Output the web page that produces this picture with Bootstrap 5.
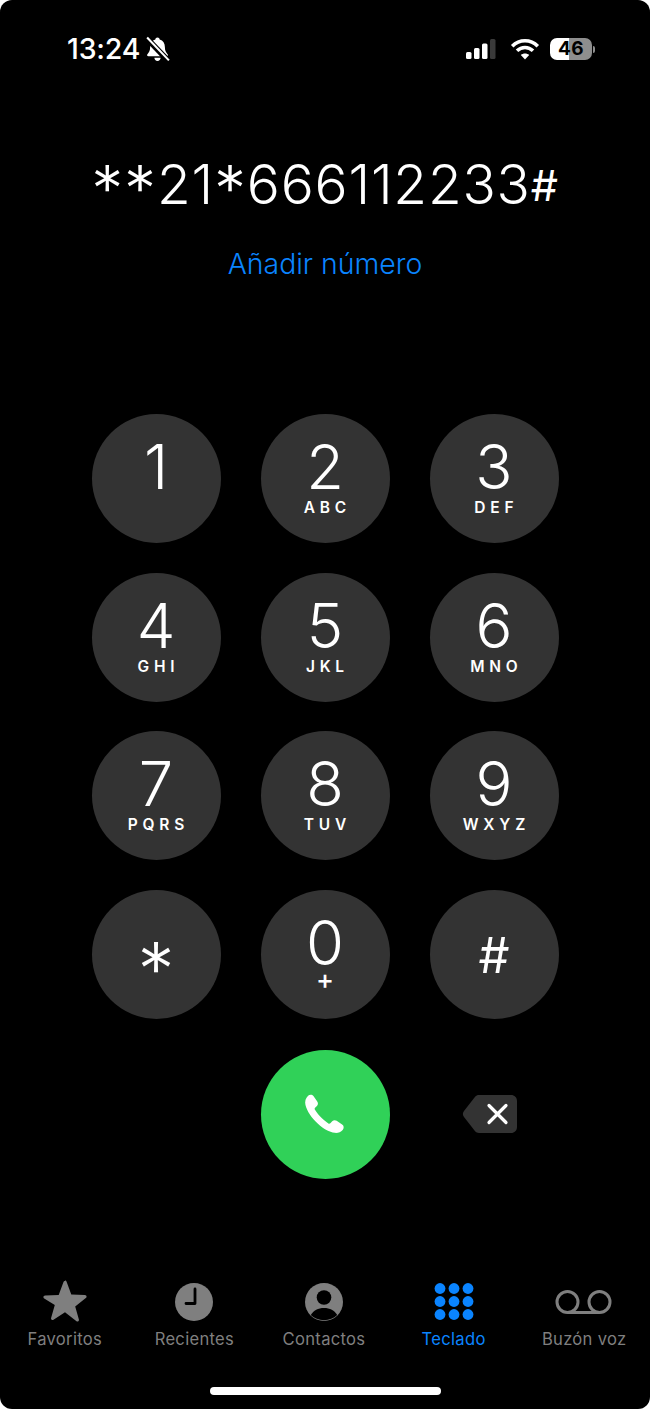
<!DOCTYPE html>
<html lang="es">
<head>
  <meta charset="UTF-8" />
  <meta name="viewport" content="width=device-width, initial-scale=1.0"/>
  <title>Teclado</title>
  <link href="https://cdn.jsdelivr.net/npm/bootstrap@5.3.0/dist/css/bootstrap.min.css" rel="stylesheet" />
  <style>
      html, body { height: 1409px; background: #fff; overflow: hidden; }
      body { font-family: Inter, "Liberation Sans", sans-serif; color: #fff; }
      .phone { width: 650px; height: 1409px; background: #000; border-radius: 12px; }
      .status-row { height: 148px; padding: 30px 55px 0 67px; }
      .clock { font-size: 28.5px; font-weight: 500; line-height: 38px; letter-spacing: -.2px; }
      .batt { width: 42px; height: 22px; border-radius: 7px; background: linear-gradient(90deg, #fff 46%, #8e8e8e 46%); color: #000; font-size: 19px; font-weight: 700; line-height: 22px; text-align: center; letter-spacing: .5px; }
      .batt-tip { width: 2px; height: 7px; background: #8e8e8e; border-radius: 0 2px 2px 0; margin-left: 1px; }
      .dialed { height: 72px; font-size: 55px; font-weight: 300; line-height: 72px; text-align: center; letter-spacing: .8px; }
      .dial-ast { font-size: 64px; line-height: 0; vertical-align: -8px; }
      .dial-hash { font-size: 43px; font-weight: 400; line-height: 0; vertical-align: 3px; }
      .add-number { display: block; margin-top: 26px; height: 36px; line-height: 36px; color: #0a84ff; font-size: 28.4px; font-weight: 300; text-align: center; text-decoration: none; }
      .keypad { width: 467px; margin: 132px auto 0 auto; display: grid; grid-template-columns: repeat(3, 129px); column-gap: 40px; row-gap: 29.67px; }
      .key { width: 129px; height: 129px; border-radius: 50%; background: #333; padding: 28px 0 0 0; border: 0; color: #fff; display: flex; flex-direction: column; align-items: center; justify-content: flex-start; }
      .key-num { display: block; font-size: 61.5px; font-weight: 300; line-height: 50px; }
      .key-sub { display: block; font-size: 15.5px; font-weight: 600; line-height: 16px; letter-spacing: 4.8px; margin-right: -4.8px; margin-top: 8px; }
      .key-plus { font-size: 27px; font-weight: 500; letter-spacing: 0; margin-right: 0; margin-top: 4px; }
      .key-star { display: block; font-size: 74px; font-weight: 300; line-height: 50px; margin-top: 26px; }
      .key-hash { display: block; font-size: 49px; font-weight: 400; line-height: 50px; margin-top: 13px; }
      .key-call { background: #30d158; padding: 0; justify-content: center; margin-top: 1px; }
      .back-wrap { width: 129px; height: 129px; padding-right: 8px; margin-top: 1px; }
      .tabs { margin-top: 99px; height: 94px; }
      .tab-item { width: 129.6px; color: #7f7f7f; font-size: 16.6px; line-height: 22px; text-decoration: none; letter-spacing: .3px; }
      .tab-item.active { color: #0a84ff; }
      .tab-icon { height: 45px; margin-bottom: 5px; }
      .tab-voice { width: 131.6px; }
      .home-bar { width: 231px; height: 8px; background: #fff; border-radius: 4px; margin: 15px auto 0 auto; }
  </style>
</head>
<body>
  <div class="phone d-flex flex-column">
    <div class="status-row d-flex justify-content-between align-items-start">
      <div class="d-flex align-items-center">
        <span class="clock">13:24</span>
        <svg class="ms-1" width="27" height="27" viewBox="0 0 26 26">
          <path d="M13 1.500c1.200 0 2 .8 2.100 1.800 3.400 1 5 3.800 5 7.400 0 3.600 1 5.200 2.600 6.800.6.600.4 2-1 2H4.300c-1.400 0-1.600-1.400-1-2 1.600-1.600 2.600-3.200 2.600-6.800 0-3.600 1.600-6.400 5-7.400.1-1 .9-1.800 2.100-1.800zM10 21h6c0 1.700-1.300 3-3 3s-3-1.300-3-3z" fill="#fff"/>
          <path d="M2 1.500 24 24.500" stroke="#000" stroke-width="5.500"/>
          <path d="M3 1.500 24 23.500" stroke="#fff" stroke-width="2"/>
        </svg>
      </div>
      <div class="d-flex align-items-center" style="height:38px">
        <svg width="34" height="22" viewBox="0 0 34 22" style="margin-right:11px">
          <rect x="1" y="14" width="5.500" height="7" rx="1.500" fill="#fff"/>
          <rect x="9" y="10" width="5.500" height="11" rx="1.500" fill="#fff"/>
          <rect x="17" y="5.500" width="5.500" height="15.500" rx="1.500" fill="#fff"/>
          <rect x="25" y="1" width="5.500" height="20" rx="1.500" fill="#3a3a3a"/>
        </svg>
        <svg width="30" height="22" viewBox="0 0 30 22" fill="none" stroke="#fff" stroke-width="3.600" style="margin-right:10px">
          <path d="M2.200 8.200C9.500 1 20.500 1 27.800 8.200"/>
          <path d="M7 12.800c4.600-4.400 11.400-4.400 16 0"/>
          <path d="M15 21.500 10.800 17c2.400-2 6-2 8.400 0z" fill="#fff" stroke="none"/>
        </svg>
        <div class="batt">46</div>
        <div class="batt-tip"></div>
      </div>
    </div>

    <div class="dialed"><span class="dial-ast">*</span><span class="dial-ast">*</span>21<span class="dial-ast">*</span>666112233<span class="dial-hash">#</span></div>
    <a class="add-number" href="#">Añadir número</a>

    <div class="keypad">
      <button class="key" type="button"><span class="key-num">1</span></button>
      <button class="key" type="button"><span class="key-num">2</span><span class="key-sub">ABC</span></button>
      <button class="key" type="button"><span class="key-num">3</span><span class="key-sub">DEF</span></button>
      <button class="key" type="button"><span class="key-num">4</span><span class="key-sub">GHI</span></button>
      <button class="key" type="button"><span class="key-num">5</span><span class="key-sub">JKL</span></button>
      <button class="key" type="button"><span class="key-num">6</span><span class="key-sub">MNO</span></button>
      <button class="key" type="button"><span class="key-num">7</span><span class="key-sub">PQRS</span></button>
      <button class="key" type="button"><span class="key-num">8</span><span class="key-sub">TUV</span></button>
      <button class="key" type="button"><span class="key-num">9</span><span class="key-sub">WXYZ</span></button>
      <button class="key" type="button"><span class="key-star">*</span></button>
      <button class="key" type="button"><span class="key-num">0</span><span class="key-sub key-plus">+</span></button>
      <button class="key" type="button"><span class="key-hash">#</span></button>
      <div></div>
      <button class="key key-call" type="button">
        <svg width="48" height="48" viewBox="0 0 44 44">
          <path d="M6.500 5.200c1.500-1.300 3.700-1.300 4.900.3l3.500 5c1 1.400.8 3-.3 4.100l-1.700 1.700c-.5.500-.5 1.200-.1 1.800 1.800 2.900 3.900 5.500 6.400 7.900 2.100 2 3.900 3.400 5.900 4.600.6.400 1.300.3 1.800-.2l1.700-1.700c1.100-1.100 2.800-1.300 4.100-.4l5 3.300c1.700 1.100 1.900 3.400.5 5-1.800 2-4.200 3-7.300 2.700-4.800-.5-10.300-3.500-15.600-8.500C9.500 25.500 5.400 19.200 4.100 13.800c-.8-3.500.2-6.500 2.400-8.600z" fill="#fff"/>
        </svg>
      </button>
      <div class="back-wrap d-flex align-items-center justify-content-center">
        <svg width="56" height="40" viewBox="0 0 56 40">
          <path d="M17 1h32c3.500 0 6 2.500 6 6v26c0 3.500-2.500 6-6 6H17c-1.600 0-2.800-.6-3.900-1.700L2 23c-1.500-1.900-1.500-4.100 0-6L13.100 2.700C14.200 1.600 15.400 1 17 1z" fill="#333"/>
          <path d="M27 11.500 44 28.500M44 11.500 27 28.500" stroke="#fff" stroke-width="3.200" stroke-linecap="round"/>
        </svg>
      </div>
    </div>

    <div class="tabs d-flex">
      <a class="tab-item d-flex flex-column align-items-center" href="#">
        <svg class="tab-icon" width="44" height="45" viewBox="0 0 44 45"><path d="M22 2.500c.8 0 1.300.5 1.600 1.300l4.700 12.800 13.500.5c1.800.1 2.400 1.900 1 3l-10.600 8.400 3.700 13c.4 1.500-1.100 2.600-2.400 1.700L22 34.200 10.500 41.700c-1.300.9-2.800-.2-2.400-1.700l3.700-13L1.200 20.600c-1.400-1.100-.8-2.900 1-3l13.500-.5 4.700-12.800c.3-.8.800-1.300 1.600-1.300z" fill="#7f7f7f"/></svg>
        <span>Favoritos</span>
      </a>
      <a class="tab-item d-flex flex-column align-items-center" href="#">
        <svg class="tab-icon" width="44" height="45" viewBox="0 0 44 45"><circle cx="22" cy="24" r="19" fill="#7f7f7f"/><path d="M23 11v14.500h-9" fill="none" stroke="#000" stroke-width="2.800" stroke-linecap="round" stroke-linejoin="round"/></svg>
        <span>Recientes</span>
      </a>
      <a class="tab-item d-flex flex-column align-items-center" href="#">
        <svg class="tab-icon" width="44" height="45" viewBox="0 0 44 45"><circle cx="22" cy="24" r="19" fill="#7f7f7f"/><circle cx="22" cy="19.500" r="7.300" fill="#000"/><path d="M8.800 37c2.600-4.600 7.400-7 13.200-7s10.600 2.400 13.200 7c-3.400 3.300-8.100 5.200-13.200 5.200S12.200 40.300 8.800 37z" fill="#000"/></svg>
        <span>Contactos</span>
      </a>
      <a class="tab-item active d-flex flex-column align-items-center" href="#">
        <svg class="tab-icon" width="44" height="45" viewBox="0 0 44 45" fill="#0a84ff">
          <circle cx="8" cy="10.500" r="5.400"/><circle cx="22" cy="10.500" r="5.400"/><circle cx="36" cy="10.500" r="5.400"/>
          <circle cx="8" cy="23.500" r="5.400"/><circle cx="22" cy="23.500" r="5.400"/><circle cx="36" cy="23.500" r="5.400"/>
          <circle cx="8" cy="36.500" r="5.400"/><circle cx="22" cy="36.500" r="5.400"/><circle cx="36" cy="36.500" r="5.400"/>
        </svg>
        <span>Teclado</span>
      </a>
      <a class="tab-item tab-voice d-flex flex-column align-items-center" href="#">
        <svg class="tab-icon" width="58" height="45" viewBox="0 0 58 45" fill="none" stroke="#7f7f7f" stroke-width="3">
          <circle cx="12.500" cy="24" r="10.500"/><circle cx="44.500" cy="24" r="10.500"/><path d="M12.500 34.500h32"/>
        </svg>
        <span>Buzón voz</span>
      </a>
    </div>
    <div class="home-bar"></div>
  </div>
  <script src="https://cdn.jsdelivr.net/npm/bootstrap@5.3.0/dist/js/bootstrap.bundle.min.js"></script>
</body>
</html>
